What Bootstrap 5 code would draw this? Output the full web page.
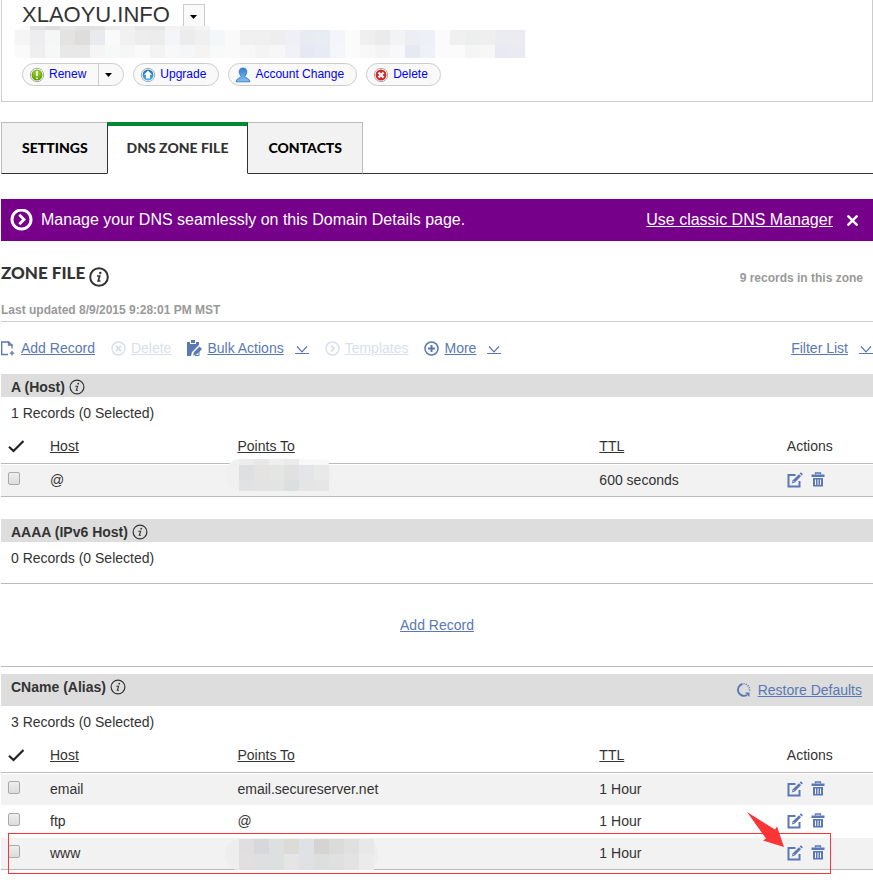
<!DOCTYPE html>
<html lang="en">
<head>
<meta charset="utf-8">
<meta name="viewport" content="width=device-width, initial-scale=1">
<title>Domain Details</title>
<link href="https://cdn.jsdelivr.net/npm/bootstrap@5.3.0/dist/css/bootstrap.min.css" rel="stylesheet">
<style>
body{font-family:"Liberation Sans",Arial,sans-serif;font-size:14px;line-height:20px;color:#333;padding-left:1px;overflow-x:hidden}
main{padding-bottom:12px}
svg{display:block;flex:none}
a{color:#5a78b4}
.domain-panel{border:1px solid #ccc;border-top:0;padding:2px 20px 15px;margin-bottom:20px}
.domain-name{font-size:22px;line-height:26px;font-weight:400;margin:0;color:#333}
.name-menu{width:22px;height:24px;border:1px solid #ccc;border-bottom:0;background:#fafafa;margin:2px 0 0 13px}
.masked-details{height:35px}
.masked-details svg{position:absolute;left:-8px;top:-2px}
.pill-row{gap:9px}
.pill{height:23px;border:1px solid #ccc;border-radius:12px;background:#f9f9f9;color:#00f;font-size:12px;line-height:19px}
.pill>button{border:0;background:none;color:inherit;padding:0 12px 0 6px;gap:4px}
.pill>.pill-menu{border-left:1px solid #ccc;padding:0 8px 0 6px;width:25px}
.display-face{font-family:Lato,"Open Sans",sans-serif;font-weight:900}
.tab-strip{border-bottom:1px solid #333;margin-bottom:25px}
.tab-strip a{height:52px;padding:0 19px;line-height:50px;font-size:14px;color:#000;background:#f2f2f2;border:1px solid #bbb;border-bottom-color:#333;margin-bottom:-1px;text-decoration:none;display:block}
.tab-strip a.active{background:#fff;color:#333;border-color:#333;border-top:4px solid #008a32;border-bottom-color:#fff;line-height:44px}
.tab-strip .tab-first{border-right:0;padding-left:20px}
.tab-strip .tab-last{border-left:0;padding:0 20px}
.promo{background:#77008b;color:#fff;height:42px;font-size:16px;padding:0 15px 0 9px}
.promo a{color:#fff}
.promo button{border:0;background:none;padding:0;margin-left:14px}
.zone-title{font-size:17px;line-height:24px;margin:0;color:#333}
.title-info{margin:6px 0 0 4px}
.quiet{font-size:12px;font-weight:700;color:#999}
.zone-count{padding:8px 10px 0 0}
.zone-head{border-bottom:1px solid #ccc;height:81px;padding-top:20px}
.zone-updated{margin-top:13px}
.toolbar{height:52px}
.toolbar .dim{color:#d8dfed}
.tool{color:#5a78b4;gap:5px}
.tool-chev{margin:4px 0 0 6px}
.section-bar{background:#ddd;height:23px;padding:2px 11px 0 10px}
.section-bar h2{font-size:14px;line-height:20px;font-weight:700;margin:0}
.section-bar.bar-tall{height:32px;padding-top:0}
.bar-tall h2,.bar-info{margin-bottom:6px}
.section-gap{margin-top:22px}
.tally{height:33px;line-height:32px;padding-left:10px}
.zone-table{width:100%;table-layout:fixed;border-collapse:separate;border-spacing:0}
.zone-table th,.zone-table td{padding:0 0 2px;position:relative}
.zone-table th{height:34px;font-weight:400;border-bottom:1px solid #bbb}
.zone-table th a{color:#333}
.zone-table td{height:32px;border-top:1px solid #fff}
.zone-table tbody tr:nth-child(odd) td{background:#f2f2f2}
.zone-table tbody tr:last-child td{height:33px;border-bottom:1px solid #bbb}
.col-tick{width:49px}.col-side{width:21.5%}.col-target{width:41.5%}
.zone-table .tick-cell{padding:7px 0 0 7px;vertical-align:top}
.zone-table th:first-child{padding-left:6px}
.tick-cell input{appearance:none;display:block;width:12px;height:13px;margin:0;border:1px solid #aaa;border-radius:2px;background:linear-gradient(#eee,#dcdcdc)}
.tick-cell input:checked{background:#5a78b4}
.actions button{border:0;background:none;padding:0;color:#5a78b4}
.mask{position:absolute;left:-12px;top:-6px}
.mask-low{top:0}
.empty-zone{border:1px solid #bbb;border-width:1px 0;height:84px;margin:8px 0 7px}
.highlight{position:absolute;left:7px;right:42px;bottom:-4px;height:41px;border:1px solid #f33;pointer-events:none}
.pointer{position:absolute;right:88px;bottom:21px;pointer-events:none}
</style>
<script src="https://cdn.jsdelivr.net/npm/bootstrap@5.3.0/dist/js/bootstrap.bundle.min.js" defer></script>
</head>
<body>
<svg width="0" height="0" class="position-absolute" aria-hidden="true">
 <defs>
  <radialGradient id="green" cx=".5" cy=".3" r=".7"><stop offset="0" stop-color="#a4dc30"/><stop offset="1" stop-color="#549808"/></radialGradient>
  <linearGradient id="blue" x2="0" y2="1"><stop offset="0" stop-color="#1d6fb5"/><stop offset="1" stop-color="#4eb4ee"/></linearGradient>
  <linearGradient id="person" x2="0" y2="1"><stop offset="0" stop-color="#2f7fd0"/><stop offset="1" stop-color="#86bff3"/></linearGradient>
 </defs>
 <symbol id="info" viewBox="0 0 16 16"><circle cx="8" cy="8" r="6.9" fill="none" stroke="currentColor" stroke-width="1.2"/><circle cx="9.2" cy="4.7" r=".9" fill="currentColor"/><path d="M6.300 7.300H8.600L7.300 11.300H9" fill="none" stroke="currentColor" stroke-width="1.1"/></symbol>
 <symbol id="info-bold" viewBox="0 0 20 20"><circle cx="10" cy="10" r="8.800" fill="none" stroke="currentColor" stroke-width="2"/><circle cx="11.300" cy="6" r="1.200" fill="currentColor"/><path d="M8 9H10.700L9.200 14H11.500" fill="none" stroke="currentColor" stroke-width="1.700"/></symbol>
 <symbol id="caret" viewBox="0 0 7 4"><path d="M0 0H7L3.5 4Z" fill="#000"/></symbol>
 <symbol id="chev" viewBox="0 0 14 12"><path d="M2 2.5 7 7.8 12 2.5" fill="none" stroke="currentColor" stroke-width="1.2"/><path d="M0 9.5H14" stroke="currentColor"/></symbol>
 <symbol id="edit" viewBox="0 0 16 16"><path d="M8.500 3H1.500V14.500H12.500V9" fill="none" stroke="currentColor" stroke-width="2"/><path d="M4.800 11.500 5.800 8.300 12 2.200 14 4.200 7.800 10.400Z" fill="currentColor"/><path d="M12.700 1.500 14 .3 15.900 2.200 14.700 3.500Z" fill="currentColor"/><path d="M6.300 9 7.200 10" stroke="#fff" stroke-width=".7"/></symbol>
 <symbol id="trash" viewBox="0 0 14 15"><path d="M4.500 2.500V1H9.500V2.500" fill="none" stroke="currentColor" stroke-width="1.3"/><path d="M.5 2.500H13.500V5H.500ZM2 6H12V14.500H2Z" fill="currentColor"/><path d="M4.500 7.500V13M7 7.500V13M9.500 7.500V13" stroke="#f2f2f2" stroke-width="1"/></symbol>
 <symbol id="tick" viewBox="0 0 17 14"><path d="M2 7.800 6.500 12 16.500 2" fill="none" stroke="#222" stroke-width="2.200"/></symbol>
</svg>

<header class="domain-panel">
 <div class="d-flex align-items-start">
  <h1 class="domain-name">XLAOYU.INFO</h1>
  <button class="name-menu p-0 d-flex align-items-center justify-content-center" type="button" aria-label="Choose domain"><svg width="7" height="4"><use href="#caret"/></svg></button>
 </div>
 <div class="masked-details position-relative"><svg id="detailsMask" width="520" height="34" aria-hidden="true"></svg></div>
 <div class="pill-row d-flex flex-wrap">
  <div class="pill d-flex">
   <button type="button" class="d-flex align-items-center"><svg width="16" height="16" viewBox="0 0 16 16"><circle cx="8" cy="8" r="6.700" fill="#fff" stroke="#aaa"/><circle cx="8" cy="8" r="5.500" fill="url(#green)"/><path d="M8 4V9M8 10.500V12" stroke="#fff" stroke-width="1.600"/></svg>Renew</button>
   <button type="button" class="pill-menu d-flex align-items-center" aria-label="Renew options"><svg width="7" height="4"><use href="#caret"/></svg></button>
  </div>
  <div class="pill d-flex"><button type="button" class="d-flex align-items-center"><svg width="16" height="16" viewBox="0 0 16 16"><circle cx="8" cy="8" r="6.700" fill="#fff" stroke="#aaa"/><circle cx="8" cy="8" r="5.500" fill="url(#blue)"/><path d="M8 3.500 12 7.700H10V11.500H6V7.700H4Z" fill="#fff"/></svg>Upgrade</button></div>
  <div class="pill d-flex"><button type="button" class="d-flex align-items-center"><svg width="16" height="16" viewBox="0 0 16 16"><path d="M8 1C10.700 1 12 2.700 11.800 5.300 11.600 7.500 10.300 8.500 10 9.500 10 11 15 11.500 15 14.800H1C1 11.500 6 11 6 9.500 5.700 8.500 4.400 7.500 4.200 5.300 4 2.700 5.300 1 8 1Z" fill="url(#person)" stroke="#2d70bd" stroke-width=".8"/></svg>Account Change</button></div>
  <div class="pill d-flex"><button type="button" class="d-flex align-items-center"><svg width="16" height="16" viewBox="0 0 16 16"><circle cx="8" cy="8" r="6.700" fill="#fff" stroke="#aaa"/><circle cx="8" cy="8" r="5.500" fill="#d42a2a"/><path d="M5.500 5.500 10.500 10.500M10.500 5.500 5.500 10.500" stroke="#fff" stroke-width="2.200"/></svg>Delete</button></div>
 </div>
</header>

<nav aria-label="Domain sections">
 <ul class="nav tab-strip display-face">
  <li><a href="#settings" class="tab-first">SETTINGS</a></li>
  <li><a href="#zone" class="active" aria-current="page">DNS ZONE FILE</a></li>
  <li><a href="#contacts" class="tab-last">CONTACTS</a></li>
 </ul>
</nav>

<div class="promo d-flex align-items-center">
 <svg width="23" height="23" viewBox="0 0 23 23" class="me-2"><circle cx="11.500" cy="10.500" r="9.500" fill="none" stroke="#fff" stroke-width="3"/><path d="M9.300 5.700 14 10.500 9.300 15.300" fill="none" stroke="#fff" stroke-width="2.800"/></svg>
 <span>Manage your DNS seamlessly on this Domain Details page.</span>
 <a href="#classic" class="ms-auto">Use classic DNS Manager</a>
 <button type="button" aria-label="Close"><svg width="11" height="11" viewBox="0 0 10 10"><path d="M.5 .5 9.500 9.500M9.500 .5 .5 9.500" stroke="#fff" stroke-width="2.200"/></svg></button>
</div>

<main id="zone">
 <div class="zone-head">
  <div class="d-flex">
   <h2 class="zone-title display-face">ZONE FILE</h2>
   <svg width="20" height="20" class="title-info"><use href="#info-bold"/></svg>
   <span class="quiet zone-count ms-auto lh-1 align-self-center">9 records in this zone</span>
  </div>
  <div class="quiet zone-updated">Last updated 8/9/2015 9:28:01 PM MST</div>
 </div>

 <div class="toolbar d-flex align-items-center" role="toolbar" aria-label="Zone file tools">
  <div class="tool d-flex align-items-center me-3"><svg width="15" height="16" viewBox="0 0 15 16"><path d="M11 8.500V5L7.500 2H.700V14.500H7" fill="none" stroke="currentColor" stroke-width="1.300"/><path d="M7.500 1.500V5H11.500M11 11V15.500M8.800 13.200H13.300" fill="none" stroke="currentColor" stroke-width="1.300"/></svg><a href="#add">Add Record</a></div>
  <div class="tool dim d-flex align-items-center me-3"><svg width="15" height="15" viewBox="0 0 15 15"><circle cx="7.500" cy="7.500" r="6.500" fill="none" stroke="currentColor" stroke-width="1.500"/><path d="M5 5 10 10M10 5 5 10" stroke="currentColor" stroke-width="1.800"/></svg><a class="dim" href="#delete" aria-disabled="true">Delete</a></div>
  <div class="tool d-flex align-items-center me-3"><svg width="15" height="16" viewBox="0 0 15 16"><path d="M0 2H3V4H9V2H12V5L5 12 4 16H0Z" fill="currentColor"/><path d="M4 0H8V3H4ZM6 15.500 7 12 12.500 6.500 15 9 9.500 14.500Z" fill="currentColor"/><path d="M5.500 12.500 12.500 5.500" stroke="#fff" stroke-width="1"/><path d="M12 10V15.500H8" fill="none" stroke="currentColor"/></svg><a href="#bulk">Bulk Actions</a><svg width="14" height="12" class="tool-chev"><use href="#chev"/></svg></div>
  <div class="tool dim d-flex align-items-center me-3"><svg width="15" height="15" viewBox="0 0 15 15"><circle cx="7.500" cy="7.500" r="6.500" fill="none" stroke="currentColor" stroke-width="1.500"/><path d="M6 4.500 9 7.500 6 10.500" fill="none" stroke="currentColor" stroke-width="1.800"/></svg><a class="dim" href="#templates" aria-disabled="true">Templates</a></div>
  <div class="tool d-flex align-items-center"><svg width="15" height="15" viewBox="0 0 15 15"><circle cx="7.500" cy="7.500" r="6.500" fill="none" stroke="currentColor" stroke-width="1.500"/><path d="M4 7.500H11M7.500 4V11" stroke="currentColor" stroke-width="2"/></svg><a href="#more">More</a><svg width="14" height="12" class="tool-chev"><use href="#chev"/></svg></div>
  <div class="tool d-flex align-items-center ms-auto"><a href="#filter">Filter List</a><svg width="14" height="12" class="tool-chev"><use href="#chev"/></svg></div>
 </div>

 <section>
  <div class="section-bar d-flex align-items-center"><h2>A (Host)</h2><svg width="16" height="16" class="ms-1"><use href="#info"/></svg></div>
  <div class="tally">1 Records (0 Selected)</div>
  <table class="zone-table">
   <colgroup><col class="col-tick"><col class="col-side"><col class="col-target"><col class="col-side"><col></colgroup>
   <thead><tr><th><svg width="17" height="14" role="img" aria-label="Select"><use href="#tick"/></svg></th><th><a href="#host">Host</a></th><th><a href="#points">Points To</a></th><th><a href="#ttl">TTL</a></th><th>Actions</th></tr></thead>
   <tbody>
    <tr><td class="tick-cell"><input type="checkbox" aria-label="Select @"></td><td>@</td><td><svg id="hostMask" class="mask" width="108" height="33" aria-hidden="true"></svg></td><td>600 seconds</td>
     <td><div class="actions d-flex gap-2"><button type="button" aria-label="Edit"><svg width="16" height="16"><use href="#edit"/></svg></button><button type="button" aria-label="Delete"><svg width="14" height="15"><use href="#trash"/></svg></button></div></td></tr>
   </tbody>
  </table>
 </section>

 <section class="section-gap">
  <div class="section-bar d-flex align-items-center"><h2>AAAA (IPv6 Host)</h2><svg width="16" height="16" class="ms-1"><use href="#info"/></svg></div>
  <div class="tally">0 Records (0 Selected)</div>
  <div class="empty-zone d-flex align-items-center justify-content-center"><a href="#add-aaaa">Add Record</a></div>
 </section>

 <section class="position-relative">
  <div class="section-bar bar-tall d-flex align-items-center"><h2>CName (Alias)</h2><svg width="16" height="16" class="bar-info ms-1"><use href="#info"/></svg>
   <div class="tool d-flex align-items-center ms-auto"><svg width="17" height="16" viewBox="0 0 17 16"><path d="M6.500 2A6 6 0 1 0 11 13" fill="none" stroke="currentColor" stroke-width="1.900"/><path d="M9 10.500H13.500V15Z" fill="currentColor"/><path d="M7.500 1.700A6.200 6.200 0 0 1 13.500 9" fill="none" stroke="currentColor" stroke-width="1.600" stroke-dasharray="1 1.300"/></svg><a href="#restore">Restore Defaults</a></div></div>
  <div class="tally">3 Records (0 Selected)</div>
  <table class="zone-table">
   <colgroup><col class="col-tick"><col class="col-side"><col class="col-target"><col class="col-side"><col></colgroup>
   <thead><tr><th><svg width="17" height="14" role="img" aria-label="Select"><use href="#tick"/></svg></th><th><a href="#host2">Host</a></th><th><a href="#points2">Points To</a></th><th><a href="#ttl2">TTL</a></th><th>Actions</th></tr></thead>
   <tbody>
    <tr><td class="tick-cell"><input type="checkbox" aria-label="Select email"></td><td>email</td><td>email.secureserver.net</td><td>1 Hour</td>
     <td><div class="actions d-flex gap-2"><button type="button" aria-label="Edit"><svg width="16" height="16"><use href="#edit"/></svg></button><button type="button" aria-label="Delete"><svg width="14" height="15"><use href="#trash"/></svg></button></div></td></tr>
    <tr><td class="tick-cell"><input type="checkbox" aria-label="Select ftp"></td><td>ftp</td><td>@</td><td>1 Hour</td>
     <td><div class="actions d-flex gap-2"><button type="button" aria-label="Edit"><svg width="16" height="16"><use href="#edit"/></svg></button><button type="button" aria-label="Delete"><svg width="14" height="15"><use href="#trash"/></svg></button></div></td></tr>
    <tr><td class="tick-cell"><input type="checkbox" aria-label="Select www"></td><td>www</td><td><svg id="wwwMask" class="mask mask-low" width="154" height="33" aria-hidden="true"></svg></td><td>1 Hour</td>
     <td><div class="actions d-flex gap-2"><button type="button" aria-label="Edit"><svg width="16" height="16"><use href="#edit"/></svg></button><button type="button" aria-label="Delete"><svg width="14" height="15"><use href="#trash"/></svg></button></div></td></tr>
   </tbody>
  </table>
  <div class="highlight"></div>
  <svg class="pointer" width="40" height="38" viewBox="0 0 40 38" aria-hidden="true"><path d="M2 1 30 18.500 32 15.500 39 36 18 29.500 21 27.500Z" fill="#fb3535"/></svg>
 </section>
</main>

<script>
// Draws a pixelated privacy mask: a pale rounded backing and rows of coloured cells.
function drawMask(id, backing, rows) {
  let out = backing.map(b => `<rect x="${b[0]}" y="${b[1]}" width="${b[2]}" height="${b[3]}" rx="${b[4]}" fill="${b[5]}"/>`).join('');
  rows.forEach(r => r.cells.split(' ').forEach((c, i) => {
    out += `<rect x="${r.x + i * 15}" y="${r.y}" width="15" height="${r.h}" fill="#${c}" shape-rendering="crispEdges"/>`;
  }));
  document.getElementById(id).innerHTML = out;
}
drawMask('detailsMask', [[0, 0, 200, 32, 14, '#fafafa'], [100, 4, 412, 28, 0, '#fbfbfb']], [
  {x: 16, y: 0, h: 4, cells: 'e2e2e4 dededf e8e7e7 e2e2e4 e3e3e4 ececec f0f0f0 e6e6e8 e6e6e6 f3f3f4 f0f0f0 f4f4f4'},
  {x: 1, y: 4, h: 15, cells: 'f5f5f6 ededef f5f6f6 e5e3e2 dfdddc e9eaed fafafa f1f1f1 ededee ececed f4f5f8 ececed f0f0f0 f3f7f9 fafafa f0f0f0 f0f0f0 eeeeee eff0f6 e9ebf2 e8ecf3 f3f5fb fbfbfb efefef ebebeb f2f3f5 edeef4 edf1f7 fbfbfc f0f0f1 ecefee efeff0 ebecf2 ebebf1'},
  {x: 1, y: 19, h: 13, cells: 'fafafa efefef f6f7f7 e9e8e8 e8e8e9 f5f5f5 f7f8f8 f5f6f6 fafafb f3f3f3 f8f8f9 f5f6f8 f5f4f3 f7faf8 fafafa f8f8f8 f4f4f5 f7f7f7 f0f2f8 e6e9f3 e8ebf4 f5f6fb fbfbfb f8f8f8 f4f4f4 f8f8fb e6e8f2 eef1f7 fbfbfb fbfbfb f4f5f4 f7f7f8 e8e9f3 e9eaf2'}
]);
drawMask('hostMask', [[1, 0, 106, 32, 14, '#f0f0f0'], [14, 0, 90, 6, 3, '#f8f8f8']], [
  {x: 14, y: 0, h: 6, cells: 'ededed e8e8e9 efefef ebebeb'},
  {x: 14, y: 6, h: 15, cells: 'dedfe1 e4e3e1 e4e6e4 e1e1e1 e3e5e8 e9e9e9'},
  {x: 14, y: 21, h: 11, cells: 'e0e2e3 e4e3e3 e2e3e3 dcdfdf e5e5e6 e6e6e6'}
]);
drawMask('wwwMask', [[0, 1, 153, 31, 14, '#eeeeee']], [
  {x: 14, y: 1, h: 15, cells: 'e0dedf d6d8dc dde0de dcdbd8 dfe1e4 d6d4d2 dbdbdb e0e0e1 e8e8e8'},
  {x: 14, y: 16, h: 16, cells: 'e1dfe0 dedfe1 dce1df e5e5e5 e0e1e4 dcdfde dfe0df e3e3e3 ebebeb'}
]);
</script>
</body>
</html>
